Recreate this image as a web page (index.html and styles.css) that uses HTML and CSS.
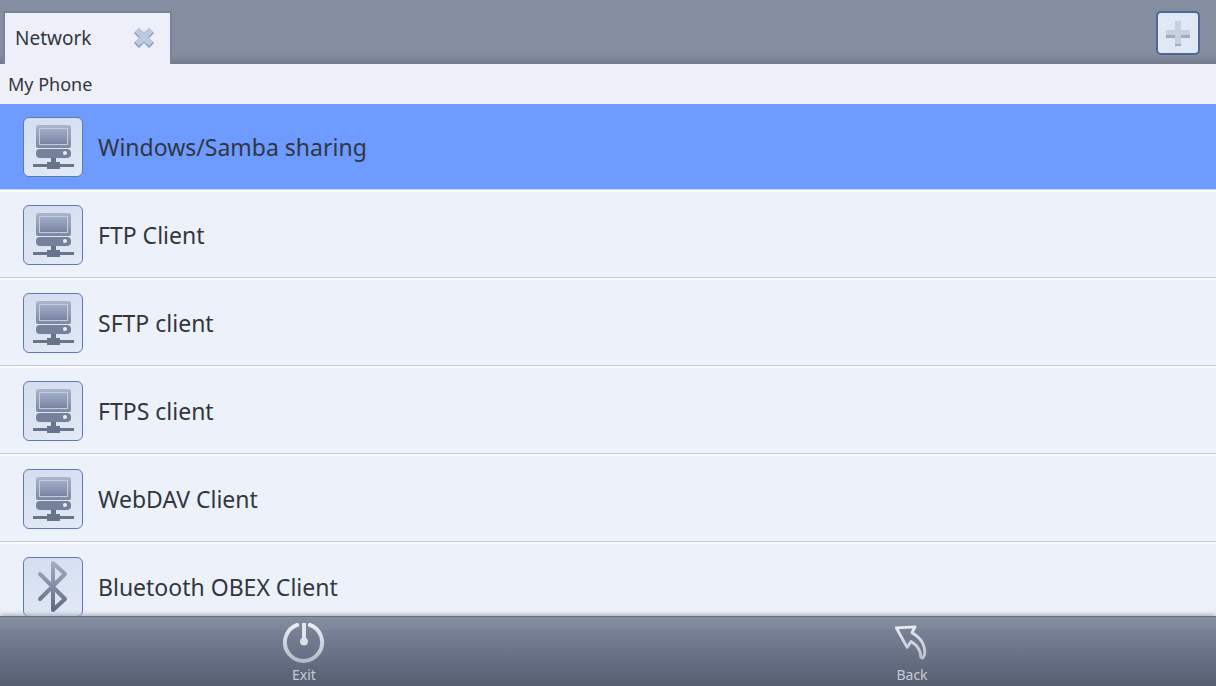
FILE: index.html
```
<!DOCTYPE html>
<html lang="en">
<head>
    <meta charset="UTF-8">
    <meta name="viewport" content="width=device-width, initial-scale=1.0">
    <title>Network</title>
    <link rel="stylesheet" href="styles.css">
</head>
<body>
    <!-- shared icons -->
    <svg class="defs" width="0" height="0" aria-hidden="true">
        <defs>
            <linearGradient id="steel" x1="0" y1="0" x2="0" y2="1">
                <stop offset="0" stop-color="#adb6cb"/>
                <stop offset="1" stop-color="#7c87a0"/>
            </linearGradient>
            <linearGradient id="screen" x1="0" y1="0" x2="0" y2="1">
                <stop offset="0" stop-color="#a3afc9"/>
                <stop offset="1" stop-color="#7682a0"/>
            </linearGradient>
            <linearGradient id="blue" gradientUnits="userSpaceOnUse" x1="0" y1="6" x2="0" y2="56">
                <stop offset="0" stop-color="#a4adc2"/>
                <stop offset="1" stop-color="#5c6880"/>
            </linearGradient>
            <linearGradient id="silver" gradientUnits="userSpaceOnUse" x1="0" y1="2" x2="0" y2="42">
                <stop offset="0" stop-color="#eef1f8"/>
                <stop offset="1" stop-color="#b4bac7"/>
            </linearGradient>
        </defs>
        <symbol id="computer" viewBox="2 2 58 58">
            <rect x="14" y="9" width="35" height="23" rx="2" fill="url(#steel)"/>
            <rect x="17.500" y="12.500" width="28" height="16" fill="url(#screen)" stroke="#c3cde2"/>
            <rect x="14" y="33" width="35" height="9" rx="4" fill="#76819b"/>
            <circle cx="43" cy="37" r="2" fill="#e6ebf5"/>
            <path d="M29 42h5v4h4v2h14v3H38v2H25v-2H11v-3h14v-2h4z" fill="#68738c"/>
        </symbol>
        <symbol id="bluetooth" viewBox="2 2 58 58">
            <path d="M18 18l25 25-12 11V7l12 11-25 25" fill="none" stroke="url(#blue)" stroke-width="4" stroke-linecap="round" stroke-linejoin="round"/>
        </symbol>
    </svg>

    <header class="tabs">
        <div class="tab">
            <span>Network</span>
            <button class="close" aria-label="Close tab">
                <svg width="22" height="22" viewBox="0 0 22 22">
                    <path d="M6 1l5 5 5-5 5 5-5 5 5 5-5 5-5-5-5 5-5-5 5-5-5-5z" fill="#8f9bb1"/>
                    <path d="M6 1l5 4 5-4 4 4-5 5 5 5-4 4-5-4-5 4-4-4 5-5-5-5z" fill="#bccae1"/>
                </svg>
            </button>
        </div>
        <button class="add" aria-label="New tab">
            <svg width="26" height="26" viewBox="0 0 26 26">
                <path d="M10 1h6v9h9v8h-9v8h-6v-8H1v-8h9z" fill="#c7d0e1"/>
                <path d="M1 15h9v3H1zM16 15h9v3h-9zM10 24h6v2h-6z" fill="#a3acbc"/>
            </svg>
        </button>
    </header>

    <div class="path">My Phone</div>

    <main class="list">
        <button class="row selected">
            <svg class="icon"><use href="#computer"/></svg>
            <span>Windows/Samba sharing</span>
        </button>
        <button class="row">
            <svg class="icon"><use href="#computer"/></svg>
            <span>FTP Client</span>
        </button>
        <button class="row">
            <svg class="icon"><use href="#computer"/></svg>
            <span>SFTP client</span>
        </button>
        <button class="row">
            <svg class="icon"><use href="#computer"/></svg>
            <span>FTPS client</span>
        </button>
        <button class="row">
            <svg class="icon"><use href="#computer"/></svg>
            <span>WebDAV Client</span>
        </button>
        <button class="row">
            <svg class="icon"><use href="#bluetooth"/></svg>
            <span>Bluetooth OBEX Client</span>
        </button>
    </main>

    <footer class="toolbar">
        <button class="tool">
            <svg width="44" height="44" viewBox="0 0 44 44">
                <path d="M15 4A19 19 0 1 0 28 4" fill="none" stroke="url(#silver)" stroke-width="4" stroke-linecap="round"/>
                <path d="M20 2h4v18h-4z" fill="#e3e7f0"/>
                <circle cx="22" cy="21" r="4" fill="#dadfea"/>
            </svg>
            <span>Exit</span>
        </button>
        <button class="tool">
            <svg width="44" height="44" viewBox="0 0 44 44">
                <path d="M6 7L25 6l-3 6Q36 20 35 34l-2 4-2-1Q31 27 21 21l-4 6z" fill="none" stroke="url(#silver)" stroke-width="3" stroke-linejoin="round"/>
            </svg>
            <span>Back</span>
        </button>
    </footer>
</body>
</html>
```
FILE: styles.css
```
* {
    box-sizing: border-box;
}

body {
    margin: 0;
    height: 100vh;
    display: flex;
    flex-direction: column;
    overflow: hidden;
    background-color: #edf1f9;
    color: #33363f;
    font-family: "Noto Sans", "Open Sans", sans-serif;
}

button {
    margin: 0;
    padding: 0;
    border: none;
    background: none;
    color: inherit;
    font: inherit;
    cursor: pointer;
}

svg {
    display: block;
}

.defs {
    position: absolute;
}

.tabs {
    display: flex;
    justify-content: space-between;
    flex-shrink: 0;
    height: 64px;
    padding: 11px 16px 0 3px;
    background: linear-gradient(#858da1, #858da1 54px, #747b8c);
}

.tab {
    display: flex;
    align-items: center;
    justify-content: space-between;
    width: 169px;
    padding: 0 15px 2px 10px;
    border: 2px solid #7b8397;
    border-bottom: none;
    background-color: #edf0f8;
    font-size: 19px;
}

.add {
    display: flex;
    align-items: center;
    justify-content: center;
    width: 44px;
    height: 44px;
    border: 2px solid #4e6797;
    border-radius: 5px;
    background-color: #e1e8f5;
}

.path {
    flex-shrink: 0;
    height: 40px;
    padding-left: 8px;
    background-color: #edf0f7;
    font-size: 18px;
    line-height: 40px;
}

.list {
    flex: 1;
    min-height: 0;
    overflow: hidden;
}

.row {
    display: flex;
    align-items: center;
    gap: 15px;
    width: 100%;
    height: 88px;
    padding-left: 23px;
    border-bottom: 2px solid #f8fafd;
    box-shadow: inset 0 -1px #c6cbd8;
    font-size: 23px;
    text-align: left;
}

.row.selected {
    background-color: #6d9bff;
    background-clip: padding-box;
    box-shadow: inset 0 -1px #c5d4f8;
}

.icon {
    width: 60px;
    height: 60px;
    border: 1px solid #5f7aae;
    border-radius: 6px;
    background: linear-gradient(160deg, #d4def0, #e2e9f6);
}

.toolbar {
    position: relative;
    display: flex;
    flex-shrink: 0;
    height: 70px;
    border-top: 1px solid #666e7e;
    background: linear-gradient(#858da1, #7d869a 12px, #788195 13px, #565f72);
    box-shadow: 0 -1px 5px #a0a6b4;
    color: #c5cad4;
    font-size: 14px;
}

.tool {
    flex: 1;
    display: flex;
    flex-direction: column;
    align-items: center;
    padding-top: 4px;
    line-height: 22px;
}
```
